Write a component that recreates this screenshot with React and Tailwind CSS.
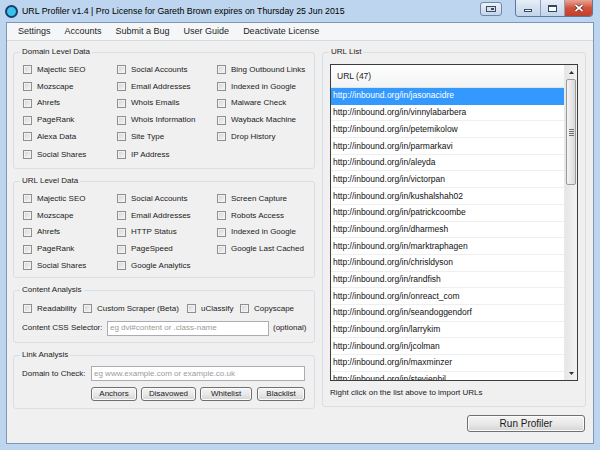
import React from 'react';

const domainItems = [
  'Majectic SEO', 'Social Accounts', 'Bing Outbound Links',
  'Mozscape', 'Email Addresses', 'Indexed in Google',
  'Ahrefs', 'Whois Emails', 'Malware Check',
  'PageRank', 'Whois Information', 'Wayback Machine',
  'Alexa Data', 'Site Type', 'Drop History',
  'Social Shares', 'IP Address', null,
];

const urlItems = [
  'Majectic SEO', 'Social Accounts', 'Screen Capture',
  'Mozscape', 'Email Addresses', 'Robots Access',
  'Ahrefs', 'HTTP Status', 'Indexed in Google',
  'PageRank', 'PageSpeed', 'Google Last Cached',
  'Social Shares', 'Google Analytics', null,
];

const urls = [
  'jasonacidre', 'vinnylabarbera', 'petemikolow', 'parmarkavi', 'aleyda',
  'victorpan', 'kushalshah02', 'patrickcoombe', 'dharmesh', 'marktraphagen',
  'chrisldyson', 'randfish', 'onreact_com', 'seandoggendorf', 'larrykim',
  'jcolman', 'maxminzer', 'stevienbil',
];

function Box() {
  return (
    <span className="w-[9px] h-[9px] shrink-0 border border-[#8e8f8f] bg-linear-to-br from-[#d2d4d8] to-[#f7f7f7] shadow-[inset_0_0_0_1px_#f2f2f2]" />
  );
}

function Check({ label }) {
  if (!label) return <div />;
  return (
    <div className="flex items-center gap-[5px]">
      <Box />
      <span className="text-[8px] leading-none whitespace-nowrap">{label}</span>
    </div>
  );
}

function Group({ title, className, children }) {
  return (
    <fieldset className={`border border-[#d5dfe5] rounded-[3px] min-w-0 ${className}`}>
      <legend className="ml-[6px] px-[2px] text-[8px] leading-[12px]">{title}</legend>
      {children}
    </fieldset>
  );
}

function Button({ children, className }) {
  return (
    <button className={`border border-[#707070] rounded-[3px] bg-linear-to-b from-[#f4f4f4] via-[#e9e9e9] to-[#d4d4d4] shadow-[inset_0_0_0_1px_#fbfbfb] text-[#1a1a1a] flex items-center justify-center leading-none ${className}`}>
      {children}
    </button>
  );
}

function Input({ placeholder, className }) {
  return (
    <div className={`h-[15px] bg-white border border-[#abadb3] flex items-center pl-[2px] text-[8px] text-[#9a9a9a] whitespace-nowrap overflow-hidden ${className}`}>
      {placeholder}
    </div>
  );
}

function Arrow({ up }) {
  return (
    <svg width="5" height="3" viewBox="0 0 5 3">
      <path d={up ? 'M0 3 L2.5 0 L5 3 Z' : 'M0 0 L2.5 3 L5 0 Z'} fill="#333" />
    </svg>
  );
}

export default function App() {
  return (
    <div className="w-[600px] h-[450px] bg-[#bdd5ee] flex flex-col overflow-hidden font-['Liberation_Sans',Arial,sans-serif] text-[#1b1b1b]">
      {/* title bar */}
      <div className="h-[22px] flex items-start shrink-0">
        <div className="flex items-center h-[23px] pl-[5px] gap-[4px]">
          <span className="w-[13px] h-[13px] rounded-full bg-[#35c4e8] border-2 border-[#1c3c70]" />
          <span className="text-[8.8px] text-black whitespace-nowrap">
            URL Profiler v1.4 | Pro License for Gareth Brown expires on Thursday 25 Jun 2015
          </span>
        </div>
        <div className="ml-auto flex items-start">
          <div className="mt-[2px] w-[22px] h-[14px] rounded-[3px] border border-[#6f86a8] bg-linear-to-b from-[#eef3f9] to-[#c3d5ea] flex items-center justify-center">
            <svg width="10" height="6" viewBox="0 0 10 6">
              <rect x="0.5" y="0.5" width="9" height="5" fill="#d8e2ee" stroke="#3b4b63" />
              <rect x="5" y="2" width="3" height="2" fill="#3b4b63" />
            </svg>
          </div>
          <div className="ml-[13px] mr-[7px] flex h-[17px] rounded-b-[4px] border border-t-0 border-[#5d789e] overflow-hidden">
            <div className="w-[25px] bg-linear-to-b from-[#e7eef7] to-[#c2d4e9] border-r border-[#8aa0bd] flex items-center justify-center">
              <span className="w-[8px] h-[3px] border border-[#35465f] bg-white mt-[4px]" />
            </div>
            <div className="w-[24px] bg-linear-to-b from-[#e7eef7] to-[#c2d4e9] border-r border-[#8aa0bd] flex items-center justify-center">
              <span className="w-[9px] h-[7px] border border-[#35465f] border-t-2 bg-white" />
            </div>
            <div className="w-[27px] bg-linear-to-b from-[#e9a393] via-[#d0513d] to-[#c13e2a] flex items-center justify-center">
              <svg width="10" height="8" viewBox="0 0 10 8">
                <path d="M1.5 1 L8.5 7 M8.5 1 L1.5 7" stroke="#5b1a12" strokeWidth="3" />
                <path d="M1.5 1 L8.5 7 M8.5 1 L1.5 7" stroke="#fff" strokeWidth="1.7" />
              </svg>
            </div>
          </div>
        </div>
      </div>

      {/* client area */}
      <div className="flex-1 mx-[6px] mb-[6px] border border-[#7f97b5] bg-[#f0f0f0] flex flex-col">
        {/* menu */}
        <div className="h-[18px] shrink-0 flex items-center pl-[4px] bg-[#f5f6f7] border-b border-[#dadbdc] text-[9px] text-[#1e1e1e]">
          <span className="px-[7px]">Settings</span>
          <span className="px-[7px]">Accounts</span>
          <span className="px-[7px]">Submit a Bug</span>
          <span className="px-[7px]">User Guide</span>
          <span className="px-[7px]">Deactivate License</span>
        </div>

        <div className="flex pl-[6px] pt-[5px] gap-[7px]">
          {/* left column */}
          <div className="w-[302px] flex flex-col gap-[6px]">
            <Group title="Domain Level Data" className="h-[123px]">
              <div className="grid grid-cols-[94px_100px_1fr] grid-rows-[16.7px_16.7px_16.7px_16.7px_16.7px_19px] items-center pl-[9px] pt-[3.6px]">
                {domainItems.map((d, i) => <Check key={i} label={d} />)}
              </div>
            </Group>

            <Group title="URL Level Data" className="h-[103px]">
              <div className="grid grid-cols-[94px_100px_1fr] grid-rows-[16.7px_16.7px_16.7px_16.7px_16.7px] items-center pl-[9px] pt-[3.6px]">
                {urlItems.map((d, i) => <Check key={i} label={d} />)}
              </div>
            </Group>

            <Group title="Content Analysis" className="h-[59px]">
              <div className="flex items-center h-[16.7px] pl-[9px] mt-[4.3px]">
                <div className="w-[60px]"><Check label="Readability" /></div>
                <div className="w-[104px]"><Check label="Custom Scraper (Beta)" /></div>
                <div className="w-[53px]"><Check label="uClassify" /></div>
                <Check label="Copyscape" />
              </div>
              <div className="flex items-center pl-[8px] mt-[4px]">
                <span className="w-[85px] text-[8px] whitespace-nowrap">Content CSS Selector:</span>
                <Input placeholder="eg dvi#content or .class-name" className="w-[162px]" />
                <span className="ml-[4px] text-[8px] whitespace-nowrap">(optional)</span>
              </div>
            </Group>

            <Group title="Link Analysis" className="h-[60px]">
              <div className="flex items-center pl-[8px] mt-[5px]">
                <span className="w-[69px] text-[8px] whitespace-nowrap">Domain to Check:</span>
                <Input placeholder="eg www.example.com or example.co.uk" className="w-[214px]" />
              </div>
              <div className="flex pl-[77px] mt-[6px] text-[8px]">
                <Button className="w-[46px] h-[14px]">Anchors</Button>
                <Button className="ml-[4px] w-[55px] h-[14px]">Disavowed</Button>
                <Button className="ml-[4px] w-[52px] h-[14px]">Whitelist</Button>
                <Button className="ml-[5px] w-[48px] h-[14px]">Blacklist</Button>
              </div>
            </Group>
          </div>

          {/* right column */}
          <div className="w-[264px] flex flex-col">
            <Group title="URL List" className="h-[361px]">
              <div className="px-[7px] pt-[6px]">
                <div className="h-[317px] border border-[#3c3c3c] bg-white flex overflow-hidden">
                  <div className="flex-1 flex flex-col overflow-hidden">
                    <div className="h-[23px] shrink-0 flex items-center pl-[6px] text-[8.5px] bg-linear-to-b from-white to-[#f2f3f5] border-b border-[#e3e4e6]">
                      URL (47)
                    </div>
                    {urls.map((u, i) => (
                      <div
                        key={u}
                        className={`h-[16.7px] shrink-0 flex items-center pl-[2px] text-[8.5px] whitespace-nowrap border-b ${i === 0 ? 'bg-[#3399ff] text-white border-[#3399ff]' : 'text-[#111] border-[#efefef]'}`}
                      >
                        http://inbound.org/in/{u}
                      </div>
                    ))}
                  </div>
                  <div className="w-[13px] shrink-0 flex flex-col bg-linear-to-r from-[#e6e6e6] to-[#f2f2f2] border-l border-[#e9e9e9]">
                    <div className="h-[14px] flex items-center justify-center"><Arrow up /></div>
                    <div className="mx-[1px] h-[106px] rounded-[2px] border border-[#9b9b9b] bg-linear-to-r from-[#f4f4f4] to-[#d9d9d9] flex flex-col items-center justify-center gap-[1px]">
                      <span className="w-[5px] h-px bg-[#6f6f6f]" />
                      <span className="w-[5px] h-px bg-[#6f6f6f]" />
                      <span className="w-[5px] h-px bg-[#6f6f6f]" />
                      <span className="w-[5px] h-px bg-[#6f6f6f]" />
                    </div>
                    <div className="flex-1" />
                    <div className="h-[13px] flex items-center justify-center"><Arrow /></div>
                  </div>
                </div>
                <div className="mt-[6px] text-[8px] leading-[12px]">Right click on the list above to import URLs</div>
              </div>
            </Group>
            <div className="flex justify-end mt-[8px] mr-[1px]">
              <Button className="w-[118px] h-[17px] text-[10px]">Run Profiler</Button>
            </div>
          </div>
        </div>
      </div>
    </div>
  );
}
